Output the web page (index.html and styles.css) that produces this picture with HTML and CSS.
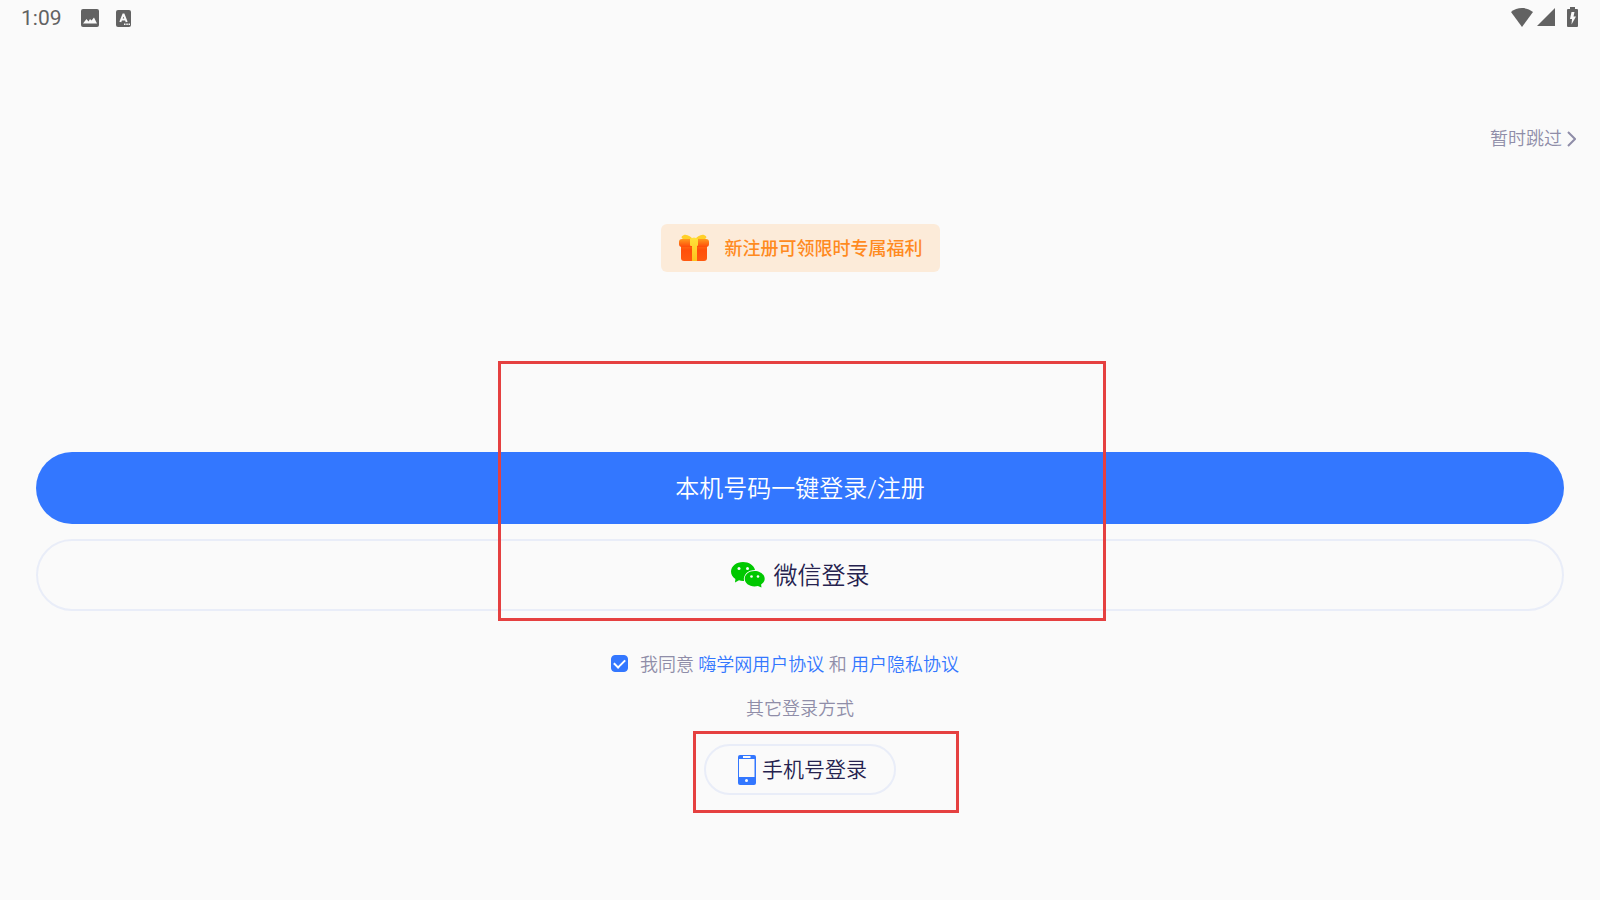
FILE: index.html
```html
<!DOCTYPE html>
<html lang="zh-CN">
<head>
  <meta charset="UTF-8">
  <meta name="viewport" content="width=device-width, initial-scale=1.0">
  <title>登录</title>
  <link rel="stylesheet" href="styles.css">
</head>
<body>

  <header class="status-bar">
    <span class="time">1:09</span>
    <svg class="status-image" width="18" height="18" viewBox="0 0 18 18">
      <path fill="#626262" d="M2 0h14a2 2 0 0 1 2 2v14a2 2 0 0 1-2 2H2a2 2 0 0 1-2-2V2a2 2 0 0 1 2-2z"/>
      <path fill="#fafafa" d="M2 14.500l3.500-4.500 2 2.500L9 10l1.500 1.500L13 8.500l3 6z"/>
    </svg>
    <svg class="status-app" width="15" height="17" viewBox="0 0 15 17">
      <rect width="15" height="17" rx="2" fill="#626262"/>
      <path fill="none" stroke="#fafafa" stroke-width="2" d="M4.300 12L7.300 4.500h.4L10.700 12M5.500 9.500h4"/>
      <path fill="#fafafa" d="M8 13.500h1.500V15H8zM10.300 13.500h1.500V15h-1.500zM12.500 13.500H14V15h-1.500z"/>
    </svg>
    <div class="status-right">
      <svg width="22" height="19" viewBox="0 0 22 19">
        <path fill="#626262" d="M0 4C6-1.300 16-1.300 22 4L11 19z"/>
      </svg>
      <svg class="signal" width="18" height="18" viewBox="0 0 18 18">
        <path fill="#626262" d="M18 0v18H0z"/>
      </svg>
      <svg class="battery" width="11" height="20" viewBox="0 0 11 20">
        <path fill="#626262" d="M3 0h5v2h2a1 1 0 0 1 1 1v16a1 1 0 0 1-1 1H1a1 1 0 0 1-1-1V3a1 1 0 0 1 1-1h2z"/>
        <path fill="#fafafa" d="M7.500 5L6.500 9.500H9L4.500 17.500 5 12H3l1.500-7z"/>
      </svg>
    </div>
  </header>

  <nav class="top-nav">
    <a class="skip" href="#">
      暂时跳过
      <svg width="9" height="16" viewBox="0 0 9 16">
        <path fill="none" stroke="#8f8da8" stroke-width="2" d="M1 1l7 7-7 7"/>
      </svg>
    </a>
  </nav>

  <main class="login">
    <div class="banner">
      <svg width="30" height="28" viewBox="0 0 30 28">
        <defs>
          <linearGradient id="box" x1="0" y1="0" x2="0" y2="1">
            <stop offset="0" stop-color="#ff7a14"/>
            <stop offset="0.400" stop-color="#ff4f0a"/>
            <stop offset="1" stop-color="#ff5a10"/>
          </linearGradient>
          <linearGradient id="lid" x1="0" y1="0" x2="0" y2="1">
            <stop offset="0" stop-color="#ff9a1e"/>
            <stop offset="1" stop-color="#ff4a0a"/>
          </linearGradient>
          <linearGradient id="ribbon" x1="0" y1="0" x2="0" y2="1">
            <stop offset="0" stop-color="#ffe23a"/>
            <stop offset="1" stop-color="#ffc21e"/>
          </linearGradient>
        </defs>
        <rect x="2" y="9" width="26" height="18" rx="3" fill="url(#box)"/>
        <rect x="0" y="5" width="30" height="8" rx="3" fill="url(#lid)"/>
        <path fill="#ffcf28" d="M15 6C12 3 8 0 5 1 2 2 2 4 4 5h9zM15 6c3-3 7-6 10-5 3 1 3 3 1 4h-9z"/>
        <path fill="url(#ribbon)" d="M11 5q4-3 8 0v6q0 1-1 1v15h-5V12h-1q-1 0-1-1z"/>
      </svg>
      <span>新注册可领限时专属福利</span>
    </div>

    <div class="login-buttons">
      <button type="button" class="btn btn-primary"><span>本机号码一键登录/注册</span></button>
      <button type="button" class="btn btn-outline">
        <svg width="34" height="26" viewBox="0 0 34 26">
          <path fill="#00c800" d="M12 0C5.400 0 0 4.200 0 9.600c0 3 1.700 5.600 4.400 7.400L4 20.500l4-2.200c1.300.4 2.600.6 4 .6h1C12 12.500 17 8 24 8 23 3.300 18 0 12 0z"/>
          <path fill="#00c800" d="M23.500 9C18 9 13.700 12.500 13.700 16.700s4.300 7.700 9.800 7.700c1.200 0 2.300-.2 3.400-.5l3.600 1.700-.4-3.200c2.300-1.400 3.600-3.400 3.600-5.700C33.700 12.500 29 9 23.500 9z"/>
          <g fill="#fafafa">
            <circle cx="8" cy="6.500" r="1.500"/>
            <circle cx="16.500" cy="6.500" r="1.500"/>
            <circle cx="20.500" cy="14.500" r="1.300"/>
            <circle cx="27" cy="14.500" r="1.300"/>
          </g>
        </svg>
        <span>微信登录</span>
      </button>
      <div class="mark mark-main"></div>
    </div>

    <div class="agreement">
      <input type="checkbox" id="agree" checked>
      <p><label for="agree">我同意</label> <a href="#">嗨学网用户协议</a> 和 <a href="#">用户隐私协议</a></p>
    </div>

    <p class="other-title">其它登录方式</p>

    <div class="other-login">
      <button type="button" class="btn-phone">
        <svg width="18" height="30" viewBox="0 0 18 30">
          <rect width="18" height="30" rx="2" fill="#3377ff"/>
          <path fill="#fafafa" d="M1 4h15.500v18H1zM5 1h7.500v2H5z"/>
          <circle cx="8.500" cy="25.500" r="1.500" fill="#fafafa"/>
        </svg>
        手机号登录
      </button>
      <div class="mark mark-phone"></div>
    </div>
  </main>

</body>
</html>
```

FILE: styles.css
```css
* {
  box-sizing: border-box;
}
body {
  min-height: 100vh;
  margin: 0;
  background-color: #fafafa;
  color: #25224f;
  font-family: Roboto, "Noto Sans CJK SC", sans-serif;
  font-size: 18px;
  font-weight: 350;
  line-height: 24px;
}
p {
  margin: 0;
}
a {
  color: #3377ff;
  text-decoration: none;
}
button {
  color: inherit;
  font-family: inherit;
  font-weight: inherit;
  line-height: 28px;
  cursor: pointer;
}
svg {
  display: block;
  flex: none;
}
.status-bar {
  display: flex;
  align-items: center;
  height: 36px;
  padding: 0 22px 0 21px;
  color: #626262;
}
.time {
  font-size: 21px;
  font-weight: 400;
}
.status-image {
  margin-left: 19px;
}
.status-app {
  margin-left: 17px;
}
.status-right {
  display: flex;
  align-items: center;
  margin-left: auto;
  padding-bottom: 2px;
}
.signal {
  margin-left: 4px;
}
.battery {
  margin-left: 12px;
}
.top-nav {
  display: flex;
  justify-content: flex-end;
  padding: 91px 24px 0;
}
.skip {
  display: flex;
  align-items: center;
  gap: 5px;
  color: #8f8da8;
}
.login {
  display: flex;
  flex-direction: column;
  align-items: center;
  padding: 73px 36px 80px;
}
.banner {
  display: flex;
  align-items: center;
  gap: 16px;
  height: 48px;
  padding: 0 17px 0 18px;
  border-radius: 6px;
  background-color: #fcebd9;
  color: #ff8a1f;
  font-weight: 500;
}
.banner span,
.btn span {
  padding-top: 2px;
}
.login-buttons {
  position: relative;
  display: flex;
  flex-direction: column;
  gap: 15px;
  width: 100%;
  margin-top: 180px;
}
.btn {
  display: flex;
  align-items: center;
  justify-content: center;
  gap: 9px;
  height: 72px;
  border: none;
  border-radius: 36px;
  font-size: 24px;
}
.btn-primary {
  background-color: #3377ff;
  color: #fff;
}
.btn-outline {
  border: 2px solid #e9edf8;
  background-color: transparent;
}
.agreement {
  display: flex;
  align-items: center;
  gap: 12px;
  margin-top: 42px;
  padding-right: 30px;
  color: #8f8da8;
}
.agreement input {
  appearance: none;
  display: flex;
  align-items: center;
  justify-content: center;
  width: 17px;
  height: 17px;
  margin: 0 0 4px;
  border: 1px solid #8f8da8;
  border-radius: 4px;
}
.agreement input:checked {
  border-color: #3377ff;
  background-color: #3377ff;
}
.agreement input:checked::before {
  content: "";
  width: 9px;
  height: 5px;
  margin-bottom: 2px;
  border-left: 2px solid #fff;
  border-bottom: 2px solid #fff;
  transform: rotate(-45deg);
}
.other-title {
  margin-top: 20px;
  color: #8f8da8;
}
.other-login {
  position: relative;
  margin-top: 23px;
}
.btn-phone {
  display: flex;
  align-items: center;
  gap: 6px;
  height: 51px;
  padding: 0 27px 0 32px;
  border: 2px solid #e9edf8;
  border-radius: 26px;
  background-color: transparent;
  font-size: 21px;
}
/* red outlines over the login options */
.mark {
  position: absolute;
  border: 3px solid #e54040;
  pointer-events: none;
}
.mark-main {
  top: -91px;
  bottom: -10px;
  left: calc(50% - 302px);
  width: 608px;
}
.mark-phone {
  top: -13px;
  left: -11px;
  width: 266px;
  height: 82px;
}
```
